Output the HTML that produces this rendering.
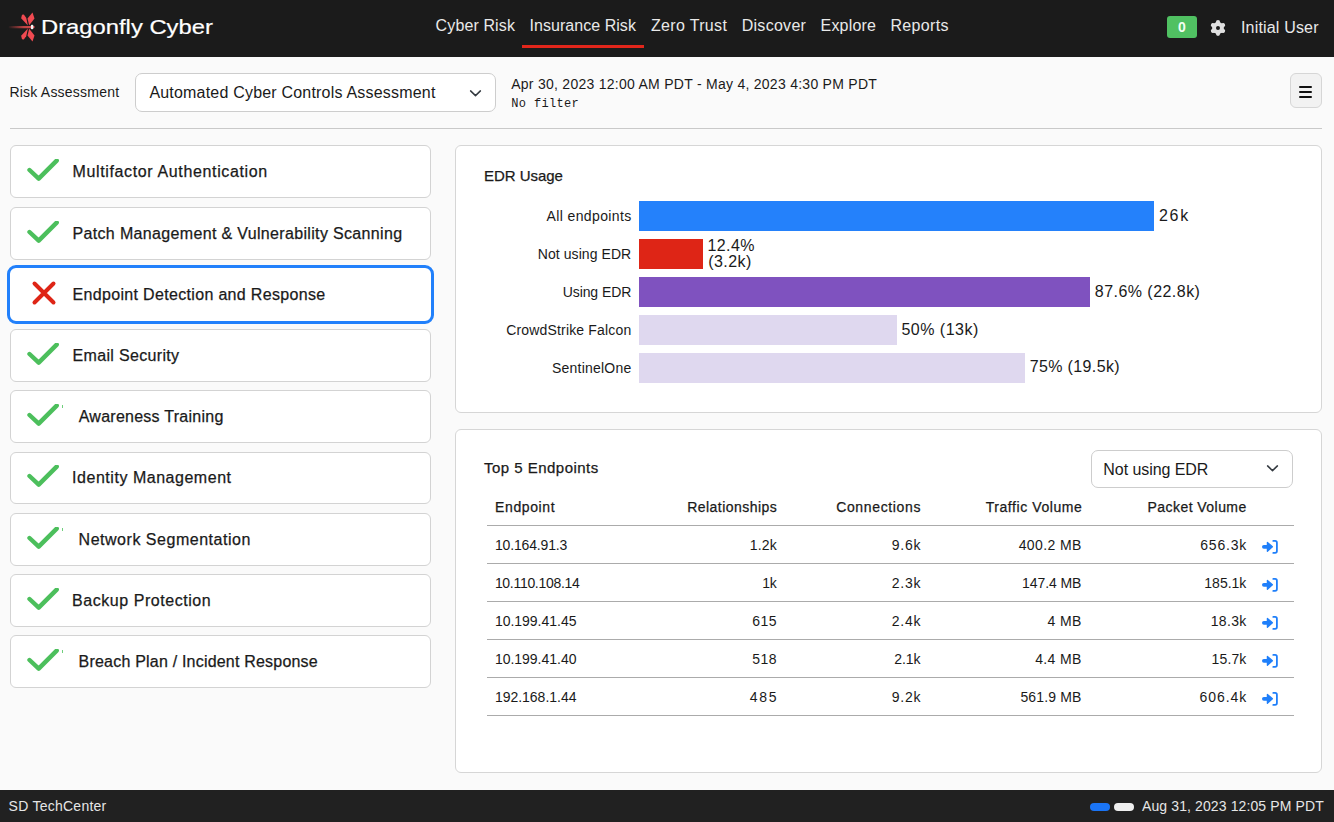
<!DOCTYPE html>
<html><head><meta charset="utf-8">
<style>
*{box-sizing:border-box;margin:0;padding:0}
html,body{width:1334px;height:822px;overflow:hidden}
body{font-family:"Liberation Sans",sans-serif;background:#fafafa;color:#1a1a1a;position:relative}
.tx{position:absolute;line-height:1;white-space:nowrap;font-family:"Liberation Sans",sans-serif}
.tx.m{-webkit-text-stroke:0.25px currentColor}
.tx.lg{-webkit-text-stroke:0.2px currentColor}
.bx{position:absolute}
#hdr{left:0;top:0;width:1334px;height:57px;background:#1b1b1b}
#ftr{left:0;top:790px;width:1334px;height:32px;background:#212121}
.card{position:absolute;left:10px;width:421px;height:52.7px;background:#fff;border:1px solid #d3d3d3;border-radius:6px}
.card.sel{left:7px;width:427px;height:58.5px;border:3px solid #2180fb;border-radius:9px}
.panel{position:absolute;left:455px;width:867px;background:#fff;border:1px solid #d6d6d6;border-radius:6px}
.bar{position:absolute;left:639px;height:29.7px}
.rl{position:absolute;left:487px;width:807px;height:1px;background:#ababab}
.ic{position:absolute;left:1262px;width:17px;height:14px}
</style></head><body>
<div class="bx" id="hdr"></div>
<div class="bx" id="ftr"></div>
<!-- logo -->
<svg class="bx" style="left:0;top:0" width="44" height="56" viewBox="0 0 44 56">
  <defs><linearGradient id="tl" x1="8" x2="34" y1="0" y2="0" gradientUnits="userSpaceOnUse"><stop offset="0" stop-color="#d84a4a" stop-opacity="0"/><stop offset="0.6" stop-color="#d84a4a" stop-opacity="0.85"/><stop offset="1" stop-color="#e04a4e"/></linearGradient></defs>
  <rect x="8.4" y="25.9" width="26.3" height="2.3" rx="1.1" fill="url(#tl)"/>
  <path d="M22 14.8 L23.8 14.6 L26.2 17.8 L27.9 25.6 L21.1 18.3 Z" fill="#f04a51"/>
  <path d="M32.5 12.6 L34.5 18.5 L29.2 25.2 L27.5 18.5 Z" fill="#f04a51"/>
  <path d="M22 39.2 L23.8 39.4 L26.2 36.2 L27.9 28.4 L21.1 35.7 Z" fill="#f04a51"/>
  <path d="M32.5 41.4 L34.5 35.5 L29.2 28.8 L27.5 35.5 Z" fill="#f04a51"/>
  <rect x="30.9" y="24.8" width="2.4" height="4.4" rx="1" fill="#f2f2f2"/>
</svg>
<!-- nav underline -->
<div class="bx" style="left:522px;top:45px;width:122px;height:3px;background:#e2261b"></div>
<!-- badge -->
<div class="bx" style="left:1167px;top:16px;width:30px;height:22px;background:#50c162;border-radius:3px"></div>
<div class="tx" style="left:1178px;top:20px;font-size:14px;line-height:1;font-weight:bold;color:#f2fff2;-webkit-text-stroke:0">0</div>
<!-- gear -->
<svg class="bx" style="left:1209.8px;top:19.8px" width="16" height="16" viewBox="0 0 16 16">
  <g fill="#e0e0e0" transform="translate(8 8)">
    <circle r="5.9"/>
    <rect x="-2.1" y="-7.9" width="4.2" height="15.8" rx="2.1"/>
    <rect x="-2.1" y="-7.9" width="4.2" height="15.8" rx="2.1" transform="rotate(60)"/>
    <rect x="-2.1" y="-7.9" width="4.2" height="15.8" rx="2.1" transform="rotate(120)"/>
  </g>
  <circle cx="8" cy="8" r="2" fill="#1b1b1b"/>
</svg>
<!-- select 1 -->
<div class="bx" style="left:135px;top:73px;width:361px;height:39px;background:#fff;border:1px solid #cdcdcd;border-radius:7px"></div>
<svg class="bx" style="left:469px;top:89px" width="13" height="9" viewBox="0 0 13 9"><path d="M1.6 1.9 L6.5 6.6 L11.4 1.9" fill="none" stroke="#343a40" stroke-width="1.5" stroke-linecap="round" stroke-linejoin="round"/></svg>
<!-- hamburger -->
<div class="bx" style="left:1290px;top:73px;width:32px;height:35px;background:#f2f2f2;border:1px solid #d6d6d6;border-radius:6px"></div>
<div class="bx" style="left:1299.2px;top:86px;width:13px;height:2px;background:#111;border-radius:1px"></div>
<div class="bx" style="left:1299.2px;top:91px;width:13px;height:2px;background:#111;border-radius:1px"></div>
<div class="bx" style="left:1299.2px;top:96px;width:13px;height:2px;background:#111;border-radius:1px"></div>
<!-- hr -->
<div class="bx" style="left:10px;top:128px;width:1312px;height:1px;background:#c9c9c9"></div>
<!-- cards -->
<div class="card" style="top:145.4px"></div>
<svg class="bx" style="left:25px;top:159.2px" width="34" height="26" viewBox="0 0 34 26"><path d="M4.5 11 L13.7 19.6 L31.7 1.6" fill="none" stroke="#4cbf5c" stroke-width="4.4" stroke-linecap="round" stroke-linejoin="round"/></svg>
<div class="card" style="top:207.3px"></div>
<svg class="bx" style="left:25px;top:221.1px" width="34" height="26" viewBox="0 0 34 26"><path d="M4.5 11 L13.7 19.6 L31.7 1.6" fill="none" stroke="#4cbf5c" stroke-width="4.4" stroke-linecap="round" stroke-linejoin="round"/></svg>
<div class="card sel" style="top:265.0px"></div>
<svg class="bx" style="left:31px;top:280px" width="26" height="26" viewBox="0 0 26 26"><path d="M3.5 3.5 L22.5 22.5 M22.5 3.5 L3.5 22.5" fill="none" stroke="#de2516" stroke-width="4" stroke-linecap="round"/></svg>
<div class="card" style="top:329.0px"></div>
<svg class="bx" style="left:25px;top:342.8px" width="34" height="26" viewBox="0 0 34 26"><path d="M4.5 11 L13.7 19.6 L31.7 1.6" fill="none" stroke="#4cbf5c" stroke-width="4.4" stroke-linecap="round" stroke-linejoin="round"/></svg>
<div class="card" style="top:390.2px"></div>
<svg class="bx" style="left:25px;top:404.0px" width="34" height="26" viewBox="0 0 34 26"><path d="M4.5 11 L13.7 19.6 L31.7 1.6" fill="none" stroke="#4cbf5c" stroke-width="4.4" stroke-linecap="round" stroke-linejoin="round"/></svg>
<div class="bx" style="left:62px;top:405.0px;width:1px;height:2.5px;background:#6fcf7c"></div>
<div class="card" style="top:451.6px"></div>
<svg class="bx" style="left:25px;top:465.4px" width="34" height="26" viewBox="0 0 34 26"><path d="M4.5 11 L13.7 19.6 L31.7 1.6" fill="none" stroke="#4cbf5c" stroke-width="4.4" stroke-linecap="round" stroke-linejoin="round"/></svg>
<div class="card" style="top:513.2px"></div>
<svg class="bx" style="left:25px;top:527.0px" width="34" height="26" viewBox="0 0 34 26"><path d="M4.5 11 L13.7 19.6 L31.7 1.6" fill="none" stroke="#4cbf5c" stroke-width="4.4" stroke-linecap="round" stroke-linejoin="round"/></svg>
<div class="bx" style="left:62px;top:528.0px;width:1px;height:2.5px;background:#6fcf7c"></div>
<div class="card" style="top:574.4px"></div>
<svg class="bx" style="left:25px;top:588.2px" width="34" height="26" viewBox="0 0 34 26"><path d="M4.5 11 L13.7 19.6 L31.7 1.6" fill="none" stroke="#4cbf5c" stroke-width="4.4" stroke-linecap="round" stroke-linejoin="round"/></svg>
<div class="card" style="top:635.4px"></div>
<svg class="bx" style="left:25px;top:649.2px" width="34" height="26" viewBox="0 0 34 26"><path d="M4.5 11 L13.7 19.6 L31.7 1.6" fill="none" stroke="#4cbf5c" stroke-width="4.4" stroke-linecap="round" stroke-linejoin="round"/></svg>
<div class="bx" style="left:62px;top:650.2px;width:1px;height:2.5px;background:#6fcf7c"></div>
<!-- panel 1 -->
<div class="panel" style="top:145px;height:268px"></div>
<div class="bar" style="top:201px;width:515px;background:#2481fb"></div>
<div class="bar" style="top:239px;width:64px;background:#de2516"></div>
<div class="bar" style="top:277px;width:451px;background:#7f52bf"></div>
<div class="bar" style="top:315px;width:257.5px;background:#dfd8ef"></div>
<div class="bar" style="top:353px;width:386px;background:#dfd8ef"></div>
<!-- panel 2 -->
<div class="panel" style="top:429.3px;height:344.2px"></div>
<div class="bx" style="left:1091px;top:450px;width:202px;height:37.5px;background:#fff;border:1px solid #cdcdcd;border-radius:7px"></div>
<svg class="bx" style="left:1266px;top:464px" width="13" height="9" viewBox="0 0 13 9"><path d="M1.6 1.9 L6.5 6.6 L11.4 1.9" fill="none" stroke="#343a40" stroke-width="1.5" stroke-linecap="round" stroke-linejoin="round"/></svg>
<div class="rl" style="top:525px"></div>
<div class="rl" style="top:563px"></div>
<div class="rl" style="top:601px"></div>
<div class="rl" style="top:639px"></div>
<div class="rl" style="top:677px"></div>
<div class="rl" style="top:715px"></div>
<svg class="ic" style="top:540.0px" viewBox="0 0 17 14"><path d="M1.9 6.8 L6.5 6.8" stroke="#1f7ffa" stroke-width="3.8" stroke-linecap="round"/><path d="M5.4 2.4 L10.4 6.8 L5.4 11.2 Z" fill="#1f7ffa" stroke="#1f7ffa" stroke-width="1.3" stroke-linejoin="round"/><path d="M11.3 0.9 L13.1 0.9 Q14.9 0.9 14.9 2.7 L14.9 11.1 Q14.9 12.9 13.1 12.9 L11.3 12.9" fill="none" stroke="#1f7ffa" stroke-width="1.8" stroke-linecap="round"/></svg>
<svg class="ic" style="top:578.0px" viewBox="0 0 17 14"><path d="M1.9 6.8 L6.5 6.8" stroke="#1f7ffa" stroke-width="3.8" stroke-linecap="round"/><path d="M5.4 2.4 L10.4 6.8 L5.4 11.2 Z" fill="#1f7ffa" stroke="#1f7ffa" stroke-width="1.3" stroke-linejoin="round"/><path d="M11.3 0.9 L13.1 0.9 Q14.9 0.9 14.9 2.7 L14.9 11.1 Q14.9 12.9 13.1 12.9 L11.3 12.9" fill="none" stroke="#1f7ffa" stroke-width="1.8" stroke-linecap="round"/></svg>
<svg class="ic" style="top:615.9px" viewBox="0 0 17 14"><path d="M1.9 6.8 L6.5 6.8" stroke="#1f7ffa" stroke-width="3.8" stroke-linecap="round"/><path d="M5.4 2.4 L10.4 6.8 L5.4 11.2 Z" fill="#1f7ffa" stroke="#1f7ffa" stroke-width="1.3" stroke-linejoin="round"/><path d="M11.3 0.9 L13.1 0.9 Q14.9 0.9 14.9 2.7 L14.9 11.1 Q14.9 12.9 13.1 12.9 L11.3 12.9" fill="none" stroke="#1f7ffa" stroke-width="1.8" stroke-linecap="round"/></svg>
<svg class="ic" style="top:653.9px" viewBox="0 0 17 14"><path d="M1.9 6.8 L6.5 6.8" stroke="#1f7ffa" stroke-width="3.8" stroke-linecap="round"/><path d="M5.4 2.4 L10.4 6.8 L5.4 11.2 Z" fill="#1f7ffa" stroke="#1f7ffa" stroke-width="1.3" stroke-linejoin="round"/><path d="M11.3 0.9 L13.1 0.9 Q14.9 0.9 14.9 2.7 L14.9 11.1 Q14.9 12.9 13.1 12.9 L11.3 12.9" fill="none" stroke="#1f7ffa" stroke-width="1.8" stroke-linecap="round"/></svg>
<svg class="ic" style="top:691.8px" viewBox="0 0 17 14"><path d="M1.9 6.8 L6.5 6.8" stroke="#1f7ffa" stroke-width="3.8" stroke-linecap="round"/><path d="M5.4 2.4 L10.4 6.8 L5.4 11.2 Z" fill="#1f7ffa" stroke="#1f7ffa" stroke-width="1.3" stroke-linejoin="round"/><path d="M11.3 0.9 L13.1 0.9 Q14.9 0.9 14.9 2.7 L14.9 11.1 Q14.9 12.9 13.1 12.9 L11.3 12.9" fill="none" stroke="#1f7ffa" stroke-width="1.8" stroke-linecap="round"/></svg>
<!-- footer pills -->
<div class="bx" style="left:1090px;top:803px;width:20px;height:8px;background:#1a74f5;border-radius:4px"></div>
<div class="bx" style="left:1114px;top:803px;width:20px;height:8px;background:#efefef;border-radius:4px"></div>
<div class='tx lg' style='top:16.2px;left:40.9px;font-size:21px;color:#ffffff;transform:scaleX(1.1326);transform-origin:0 0'>Dragonfly Cyber</div>
<div class='tx' style='top:18.1px;font-size:16px;letter-spacing:0.121px;color:#e9e9e9;left:435.6px;'>Cyber Risk</div>
<div class='tx' style='top:18.1px;font-size:16px;letter-spacing:0.038px;color:#e9e9e9;left:529.6px;'>Insurance Risk</div>
<div class='tx' style='top:18.1px;font-size:16px;letter-spacing:0.324px;color:#e9e9e9;left:651.0px;'>Zero Trust</div>
<div class='tx' style='top:18.1px;font-size:16px;letter-spacing:0.284px;color:#e9e9e9;left:741.7px;'>Discover</div>
<div class='tx' style='top:18.1px;font-size:16px;letter-spacing:0.178px;color:#e9e9e9;left:820.6px;'>Explore</div>
<div class='tx' style='top:18.1px;font-size:16px;letter-spacing:0.365px;color:#e9e9e9;left:890.4px;'>Reports</div>
<div class='tx' style='top:20.0px;font-size:16px;letter-spacing:0.177px;color:#e9e9e9;left:1241.0px;'>Initial User</div>
<div class='tx' style='top:85.2px;font-size:14px;letter-spacing:0.22px;color:#1a1a1a;left:9.4px;'>Risk Assessment</div>
<div class='tx' style='top:85.0px;font-size:16px;letter-spacing:0.197px;color:#1a1a1a;left:149.4px;'>Automated Cyber Controls Assessment</div>
<div class='tx' style='top:76.7px;font-size:14px;letter-spacing:0.268px;color:#1a1a1a;left:511.2px;'>Apr 30, 2023 12:00 AM PDT - May 4, 2023 4:30 PM PDT</div>
<div class='tx' style='top:97.7px;font-size:12px;letter-spacing:0.328px;color:#1a1a1a;font-family:"Liberation Mono";left:511.3px;'>No filter</div>
<div class='tx m' style='top:164.0px;font-size:16px;letter-spacing:0.638px;color:#1a1a1a;left:72.5px;'>Multifactor Authentication</div>
<div class='tx m' style='top:225.9px;font-size:16px;letter-spacing:0.339px;color:#1a1a1a;left:72.5px;'>Patch Management &amp; Vulnerability Scanning</div>
<div class='tx m' style='top:286.6px;font-size:16px;letter-spacing:0.323px;color:#1a1a1a;left:72.6px;'>Endpoint Detection and Response</div>
<div class='tx m' style='top:347.6px;font-size:16px;letter-spacing:0.328px;color:#1a1a1a;left:72.6px;'>Email Security</div>
<div class='tx m' style='top:408.8px;font-size:16px;letter-spacing:0.258px;color:#1a1a1a;left:78.7px;'>Awareness Training</div>
<div class='tx m' style='top:470.2px;font-size:16px;letter-spacing:0.528px;color:#1a1a1a;left:72.1px;'>Identity Management</div>
<div class='tx m' style='top:531.8px;font-size:16px;letter-spacing:0.519px;color:#1a1a1a;left:78.6px;'>Network Segmentation</div>
<div class='tx m' style='top:593.0px;font-size:16px;letter-spacing:0.541px;color:#1a1a1a;left:72.1px;'>Backup Protection</div>
<div class='tx m' style='top:654.0px;font-size:16px;letter-spacing:0.203px;color:#1a1a1a;left:78.6px;'>Breach Plan / Incident Response</div>
<div class='tx m' style='top:168.0px;font-size:15px;letter-spacing:-0.063px;color:#1a1a1a;left:484.1px;'>EDR Usage</div>
<div class='tx' style='top:209.0px;font-size:14px;letter-spacing:0.376px;color:#1a1a1a;right:702.4px;'>All endpoints</div>
<div class='tx' style='top:247.1px;font-size:14px;letter-spacing:0.074px;color:#1a1a1a;right:702.7px;'>Not using EDR</div>
<div class='tx' style='top:284.8px;font-size:14px;letter-spacing:-0.084px;color:#1a1a1a;right:702.8px;'>Using EDR</div>
<div class='tx' style='top:322.9px;font-size:14px;letter-spacing:0.172px;color:#1a1a1a;right:702.6px;'>CrowdStrike Falcon</div>
<div class='tx' style='top:360.6px;font-size:14px;letter-spacing:0.222px;color:#1a1a1a;right:702.5px;'>SentinelOne</div>
<div class='tx' style='top:208.0px;font-size:16px;letter-spacing:1.712px;color:#1a1a1a;left:1159.0px;'>26k</div>
<div class='tx' style='top:237.8px;font-size:16px;letter-spacing:0.361px;color:#1a1a1a;left:707.6px;'>12.4%</div>
<div class='tx' style='top:254.2px;font-size:16px;letter-spacing:0.463px;color:#1a1a1a;left:708.2px;'>(3.2k)</div>
<div class='tx' style='top:283.5px;font-size:16px;letter-spacing:0.459px;color:#1a1a1a;left:1094.8px;'>87.6% (22.8k)</div>
<div class='tx' style='top:321.6px;font-size:16px;letter-spacing:0.5px;color:#1a1a1a;left:901.4px;'>50% (13k)</div>
<div class='tx' style='top:359.2px;font-size:16px;letter-spacing:0.365px;color:#1a1a1a;left:1029.7px;'>75% (19.5k)</div>
<div class='tx m' style='top:459.9px;font-size:15px;letter-spacing:0.466px;color:#1a1a1a;left:484.1px;'>Top 5 Endpoints</div>
<div class='tx' style='top:462.0px;font-size:16px;letter-spacing:-0.059px;color:#1a1a1a;left:1103.3px;'>Not using EDR</div>
<div class='tx m' style='top:500.0px;font-size:14px;letter-spacing:0.628px;color:#1a1a1a;left:495.0px;'>Endpoint</div>
<div class='tx m' style='top:500.0px;font-size:14px;letter-spacing:0.468px;color:#1a1a1a;right:556.7px;'>Relationships</div>
<div class='tx m' style='top:500.0px;font-size:14px;letter-spacing:0.645px;color:#1a1a1a;right:412.9px;'>Connections</div>
<div class='tx m' style='top:500.0px;font-size:14px;letter-spacing:0.575px;color:#1a1a1a;right:251.6px;'>Traffic Volume</div>
<div class='tx m' style='top:500.0px;font-size:14px;letter-spacing:0.441px;color:#1a1a1a;right:87.3px;'>Packet Volume</div>
<div class='tx' style='top:538.3px;font-size:14px;letter-spacing:-0.149px;color:#1a1a1a;left:494.9px;'>10.164.91.3</div>
<div class='tx' style='top:538.3px;font-size:14px;letter-spacing:0.137px;color:#1a1a1a;right:557.2px;'>1.2k</div>
<div class='tx' style='top:538.3px;font-size:14px;letter-spacing:0.737px;color:#1a1a1a;right:412.8px;'>9.6k</div>
<div class='tx' style='top:538.3px;font-size:14px;letter-spacing:0.392px;color:#1a1a1a;right:252.3px;'>400.2 MB</div>
<div class='tx' style='top:538.3px;font-size:14px;letter-spacing:0.827px;color:#1a1a1a;right:86.8px;'>656.3k</div>
<div class='tx' style='top:576.2px;font-size:14px;letter-spacing:-0.302px;color:#1a1a1a;left:494.9px;'>10.110.108.14</div>
<div class='tx' style='top:576.2px;font-size:14px;letter-spacing:-0.317px;color:#1a1a1a;right:557.7px;'>1k</div>
<div class='tx' style='top:576.2px;font-size:14px;letter-spacing:0.737px;color:#1a1a1a;right:412.8px;'>2.3k</div>
<div class='tx' style='top:576.2px;font-size:14px;letter-spacing:-0.08px;color:#1a1a1a;right:252.7px;'>147.4 MB</div>
<div class='tx' style='top:576.2px;font-size:14px;letter-spacing:-0.013px;color:#1a1a1a;right:87.7px;'>185.1k</div>
<div class='tx' style='top:614.2px;font-size:14px;letter-spacing:-0.015px;color:#1a1a1a;left:494.9px;'>10.199.41.45</div>
<div class='tx' style='top:614.2px;font-size:14px;letter-spacing:0.56px;color:#1a1a1a;right:556.8px;'>615</div>
<div class='tx' style='top:614.2px;font-size:14px;letter-spacing:0.737px;color:#1a1a1a;right:412.8px;'>2.4k</div>
<div class='tx' style='top:614.2px;font-size:14px;letter-spacing:0.431px;color:#1a1a1a;right:252.2px;'>4 MB</div>
<div class='tx' style='top:614.2px;font-size:14px;letter-spacing:0.357px;color:#1a1a1a;right:87.3px;'>18.3k</div>
<div class='tx' style='top:652.1px;font-size:14px;letter-spacing:-0.015px;color:#1a1a1a;left:494.9px;'>10.199.41.40</div>
<div class='tx' style='top:652.1px;font-size:14px;letter-spacing:0.56px;color:#1a1a1a;right:556.8px;'>518</div>
<div class='tx' style='top:652.1px;font-size:14px;letter-spacing:-0.13px;color:#1a1a1a;right:413.7px;'>2.1k</div>
<div class='tx' style='top:652.1px;font-size:14px;letter-spacing:0.364px;color:#1a1a1a;right:252.3px;'>4.4 MB</div>
<div class='tx' style='top:652.1px;font-size:14px;letter-spacing:0.107px;color:#1a1a1a;right:87.6px;'>15.7k</div>
<div class='tx' style='top:690.1px;font-size:14px;letter-spacing:-0.015px;color:#1a1a1a;left:494.9px;'>192.168.1.44</div>
<div class='tx' style='top:690.1px;font-size:14px;letter-spacing:1.76px;color:#1a1a1a;right:555.6px;'>485</div>
<div class='tx' style='top:690.1px;font-size:14px;letter-spacing:0.737px;color:#1a1a1a;right:412.8px;'>9.2k</div>
<div class='tx' style='top:690.1px;font-size:14px;letter-spacing:0.149px;color:#1a1a1a;right:252.5px;'>561.9 MB</div>
<div class='tx' style='top:690.1px;font-size:14px;letter-spacing:0.967px;color:#1a1a1a;right:86.7px;'>606.4k</div>
<div class='tx' style='top:799.0px;font-size:14px;letter-spacing:0.249px;color:#e6e6e6;left:8.6px;'>SD TechCenter</div>
<div class='tx' style='top:799.0px;font-size:14px;letter-spacing:0.112px;color:#e6e6e6;left:1142.0px;'>Aug 31, 2023 12:05 PM PDT</div>
</body></html>
